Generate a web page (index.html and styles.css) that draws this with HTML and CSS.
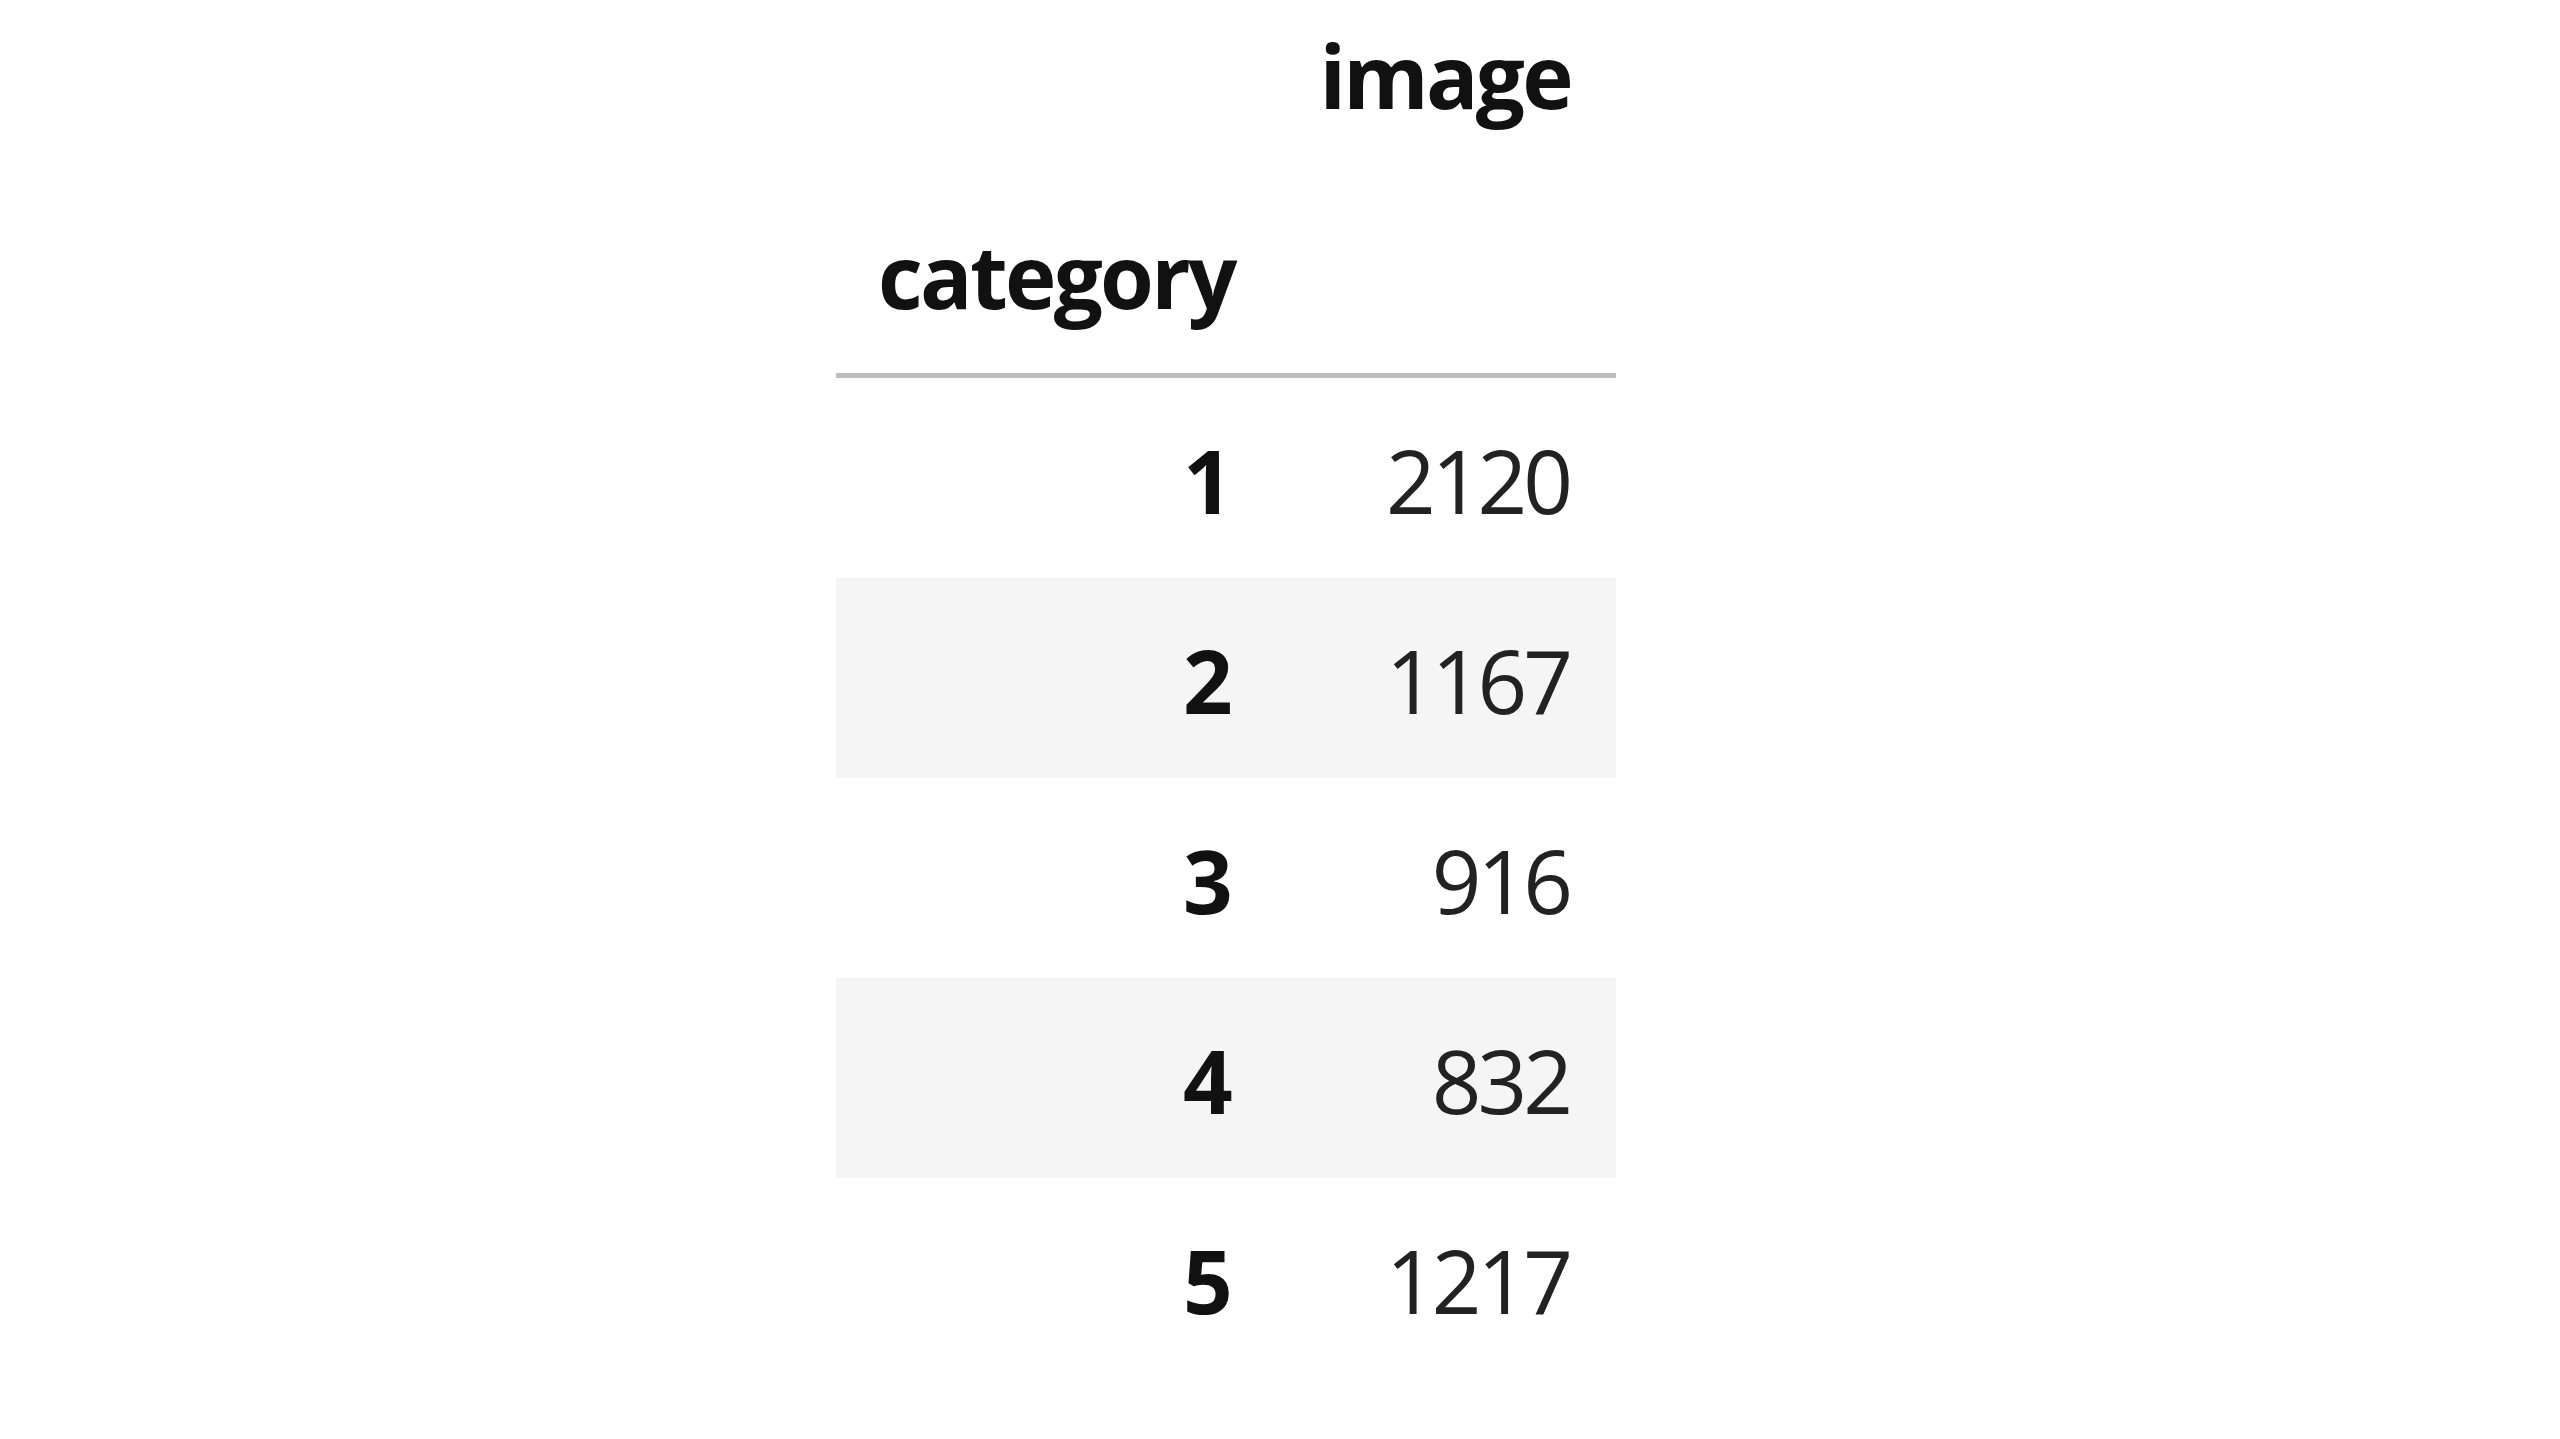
FILE: index.html
```html
<!DOCTYPE html>
<html lang="en">
<head>
  <meta charset="UTF-8" />
  <title>category counts</title>
  <link rel="stylesheet" href="styles.css">
</head>
<body>
  <table class="dataframe">
    <thead>
      <tr>
        <th class="index-col"></th>
        <th class="value-col">image</th>
      </tr>
      <tr>
        <th class="index-col index-name">category</th>
        <th class="value-col"></th>
      </tr>
    </thead>
    <tbody>
      <tr><th class="index-col">1</th><td class="value-col">2120</td></tr>
      <tr><th class="index-col">2</th><td class="value-col">1167</td></tr>
      <tr><th class="index-col">3</th><td class="value-col">916</td></tr>
      <tr><th class="index-col">4</th><td class="value-col">832</td></tr>
      <tr><th class="index-col">5</th><td class="value-col">1217</td></tr>
    </tbody>
  </table>
</body>
</html>
```

FILE: styles.css
```css
html, body {
  margin: 0;
  padding: 0;
  background: #fff;
  font-family: 'Open Sans', 'Noto Sans', sans-serif;
  color: #000;
  overflow: hidden;
}
.dataframe {
  border-collapse: collapse;
  border-spacing: 0;
  margin: -27px 0 0 836px;
  font-size: 87px;
  table-layout: fixed;
  width: 780px;
}
.dataframe th, .dataframe td {
  height: 200px;
  box-sizing: border-box;
  padding: 4px 0 0 20px;
  line-height: 196px;
  text-align: right;
  vertical-align: top;
  white-space: nowrap;
}
.dataframe th {
  font-weight: bold;
  color: #111;
  letter-spacing: -2.7px;
}
.dataframe td {
  color: #222;
  letter-spacing: -4px;
}
.dataframe thead {
  border-bottom: 5px solid #bdbdbd;
}
.dataframe tbody tr:nth-child(even) {
  background: #f5f5f5;
}
.index-col {
  width: 434px;
}
.dataframe .index-col {
  padding-right: 40px;
}
.value-col {
  width: 346px;
}
.dataframe th.value-col {
  padding-right: 45px;
}
.dataframe td.value-col {
  padding-right: 47px;
}
.dataframe .index-name {
  text-align: left;
  padding-left: 42px;
}
```
